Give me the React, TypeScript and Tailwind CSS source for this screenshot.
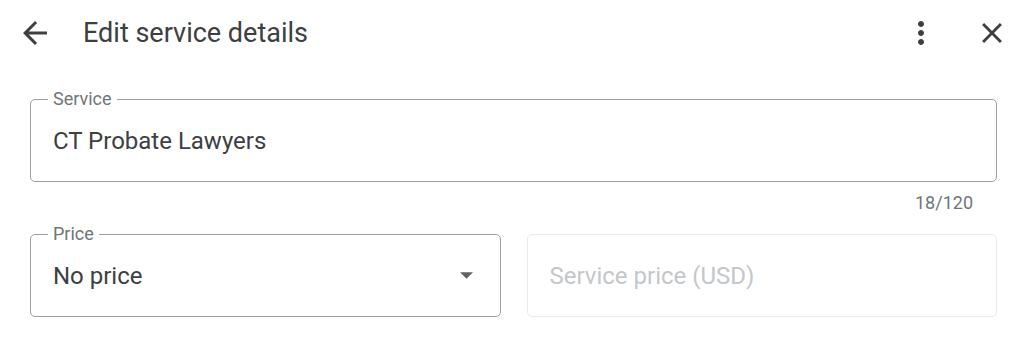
import React from 'react';

const font = { fontFamily: 'Roboto, "Noto Sans", Arial, sans-serif' };

const OutlinedField = ({ label, children }: { label: string; children: React.ReactNode }) => (
    <div className="relative h-[83px] rounded-[5px] border border-[#9aa0a6] flex items-center px-[22px]">
        <span className="absolute left-[17px] top-[-13px] bg-white px-[5px] text-[18px] leading-[24px] text-[#70757a]">
            {label}
        </span>
        {children}
    </div>
);

export default function App() {
    return (
        <div className="w-[1024px] h-[342px] bg-white" style={font}>
            {/* Header */}
            <div className="flex items-center h-[66px] pl-[17px] pr-[15px]">
                <svg width="36" height="36" viewBox="0 0 24 24" className="text-[#3c4043]">
                    <path fill="currentColor" d="M20 11H7.83l5.59-5.59L12 4l-8 8 8 8 1.41-1.41L7.83 13H20v-2z" />
                </svg>
                <h1 className="ml-[30px] text-[27px] text-[#3c4043] leading-none">Edit service details</h1>
                <div className="ml-auto flex items-center gap-[36px]">
                    <svg width="36" height="36" viewBox="0 0 24 24" className="text-[#3c4043]">
                        <path fill="currentColor" d="M12 8c1.1 0 2-.9 2-2s-.9-2-2-2-2 .9-2 2 .9 2 2 2zm0 2c-1.1 0-2 .9-2 2s.9 2 2 2 2-.9 2-2-.9-2-2-2zm0 6c-1.1 0-2 .9-2 2s.9 2 2 2 2-.9 2-2-.9-2-2-2z" />
                    </svg>
                    <svg width="34" height="34" viewBox="0 0 24 24" className="text-[#3c4043]">
                        <path fill="currentColor" d="M19 6.41L17.59 5 12 10.59 6.41 5 5 6.41 10.59 12 5 17.59 6.41 19 12 13.41 17.59 19 19 17.59 13.41 12z" />
                    </svg>
                </div>
            </div>

            {/* Form */}
            <div className="pl-[30px] pr-[27px] pt-[33px]">
                <OutlinedField label="Service">
                    <span className="text-[24px] text-[#3c4043]">CT Probate Lawyers</span>
                </OutlinedField>
                <div className="flex justify-end pr-[24px] pt-[7px] h-[52px]">
                    <span className="text-[18px] text-[#70757a]">18/120</span>
                </div>
                <div className="grid grid-cols-2 gap-[26px]">
                    <OutlinedField label="Price">
                        <span className="text-[24px] text-[#3c4043]">No price</span>
                        <svg width="13" height="7" viewBox="0 0 10 5" className="ml-auto mr-[5px] text-[#5f6368]">
                            <path fill="currentColor" d="M0 0l5 5 5-5z" />
                        </svg>
                    </OutlinedField>
                    <div className="h-[83px] rounded-[5px] border border-[#e8eaed] flex items-center px-[22px]">
                        <span className="text-[24px] text-[#c4c7c9]">Service price (USD)</span>
                    </div>
                </div>
            </div>
        </div>
    );
}
